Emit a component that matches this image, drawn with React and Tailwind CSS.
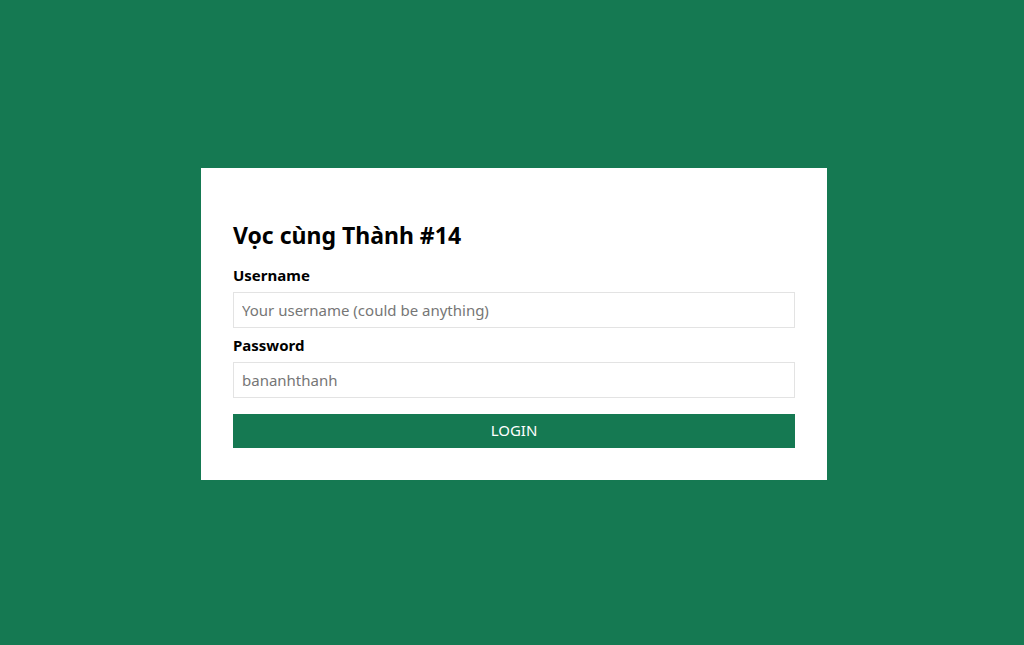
import React from 'react';

export default function App() {
    return (
        <div className="min-h-[645px] w-full bg-[#157952] flex items-center justify-center pt-[2px] pl-1" style={{ fontFamily: '"Noto Sans", "Open Sans", sans-serif' }}>
            <form
                onSubmit={e => e.preventDefault()}
                className="w-[626px] bg-white px-8 pt-[52px] pb-8 flex flex-col"
            >
                <h1 className="text-[23px] leading-[30px] font-bold text-black">Vọc cùng Thành #14</h1>

                <label className="mt-[14px] text-[15px] leading-[22px] font-bold text-black">Username</label>
                <input
                    type="text"
                    placeholder="Your username (could be anything)"
                    className="mt-[6px] h-[36px] w-full border border-[#e3e3e3] px-2 text-[15px] text-black placeholder:text-[#767676] outline-none"
                />

                <label className="mt-[6px] text-[15px] leading-[22px] font-bold text-black">Password</label>
                <input
                    type="password"
                    placeholder="bananhthanh"
                    className="mt-[6px] h-[36px] w-full border border-[#e3e3e3] px-2 text-[15px] text-black placeholder:text-[#767676] outline-none"
                />

                <button type="submit" className="mt-4 h-[34px] w-full bg-[#157952] text-white text-[15px]">
                    LOGIN
                </button>
            </form>
        </div>
    );
}
